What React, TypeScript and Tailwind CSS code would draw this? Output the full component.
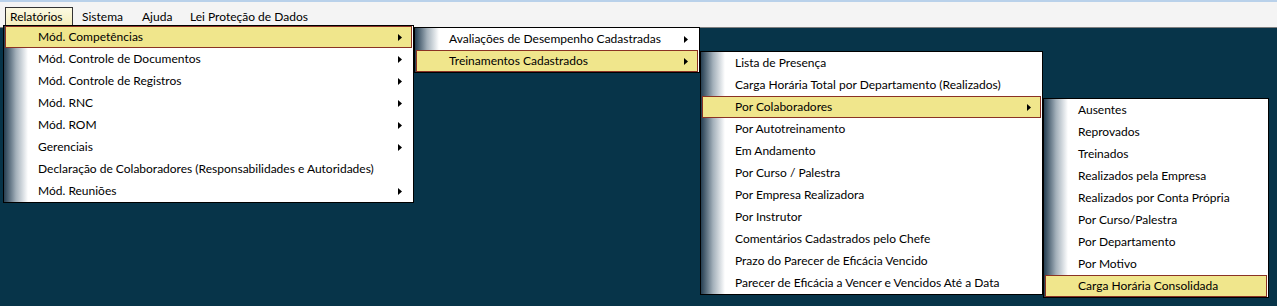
import React from "react";

type Item = { label: string; sub?: boolean; active?: boolean };

const menu1: Item[] = [
  { label: "Mód. Competências", sub: true, active: true },
  { label: "Mód. Controle de Documentos", sub: true },
  { label: "Mód. Controle de Registros", sub: true },
  { label: "Mód. RNC", sub: true },
  { label: "Mód. ROM", sub: true },
  { label: "Gerenciais", sub: true },
  { label: "Declaração de Colaboradores (Responsabilidades e Autoridades)" },
  { label: "Mód. Reuniões", sub: true },
];

const menu2: Item[] = [
  { label: "Avaliações de Desempenho Cadastradas", sub: true },
  { label: "Treinamentos Cadastrados", sub: true, active: true },
];

const menu3: Item[] = [
  { label: "Lista de Presença" },
  { label: "Carga Horária Total por Departamento (Realizados)" },
  { label: "Por Colaboradores", sub: true, active: true },
  { label: "Por Autotreinamento" },
  { label: "Em Andamento" },
  { label: "Por Curso / Palestra" },
  { label: "Por Empresa Realizadora" },
  { label: "Por Instrutor" },
  { label: "Comentários Cadastrados pelo Chefe" },
  { label: "Prazo do Parecer de Eficácia Vencido" },
  { label: "Parecer de Eficácia a Vencer e Vencidos Até a Data" },
];

const menu4: Item[] = [
  { label: "Ausentes" },
  { label: "Reprovados" },
  { label: "Treinados" },
  { label: "Realizados pela Empresa" },
  { label: "Realizados por Conta Própria" },
  { label: "Por Curso/Palestra" },
  { label: "Por Departamento" },
  { label: "Por Motivo" },
  { label: "Carga Horária Consolidada", active: true },
];

function Arrow() {
  return (
    <svg width="4" height="7" viewBox="0 0 4 7" className="shrink-0">
      <polygon points="0,0 4,3.5 0,7" fill="#000" />
    </svg>
  );
}

function Menu({ items, className }: { items: Item[]; className: string }) {
  return (
    <div className={"absolute border border-black bg-white " + className}>
      <div className="relative flex flex-col">
        <div className="absolute left-0 top-0 bottom-0 w-[24px] bg-gradient-to-r from-[#263f52] via-[#a3b0ba] to-white" />
        {items.map((it, i) => (
          <div
            key={i}
            className={
              "relative flex h-[22px] items-center pl-[32px] pr-[9px] " +
              (it.active
                ? "mx-[1px] border border-[#8a3324] bg-[#f0e68c]"
                : "mx-[1px] border border-transparent")
            }
          >
            <span className="flex-1 whitespace-nowrap">{it.label}</span>
            {it.sub ? <Arrow /> : null}
          </div>
        ))}
      </div>
    </div>
  );
}

export default function App() {
  return (
    <div
      className="relative h-[306px] w-[1277px] overflow-hidden bg-[#073449] text-[12px] leading-[16px] text-black"
      style={{ fontFamily: "Lato, 'Noto Sans', sans-serif" }}
    >
      <div className="h-[2px] bg-[#b9d1ea]" />
      <div className="flex h-[26px] items-start border-b border-[#7f7f7f] bg-[#f4f4f4] pt-[5px]">
        <div className="ml-[5px] flex h-[21px] w-[68px] items-center border border-b-0 border-[#333333] bg-gradient-to-b from-[#fcf9e2] to-[#f3ecb6] pb-[2px] pl-[4px]">
          Relatórios
        </div>
        <div className="flex h-[21px] w-[67px] items-center pb-[2px] pl-[9px]">Sistema</div>
        <div className="flex h-[21px] w-[50px] items-center pb-[2px] pl-[2px]">Ajuda</div>
        <div className="flex h-[21px] items-center pb-[2px]">Lei Proteção de Dados</div>
      </div>

      <Menu items={menu1} className="left-[3px] top-[25px] w-[411px]" />
      <Menu items={menu2} className="left-[414px] top-[27px] w-[286px]" />
      <Menu items={menu3} className="left-[700px] top-[51px] w-[343px]" />
      <Menu items={menu4} className="left-[1043px] top-[98px] w-[226px]" />
    </div>
  );
}
